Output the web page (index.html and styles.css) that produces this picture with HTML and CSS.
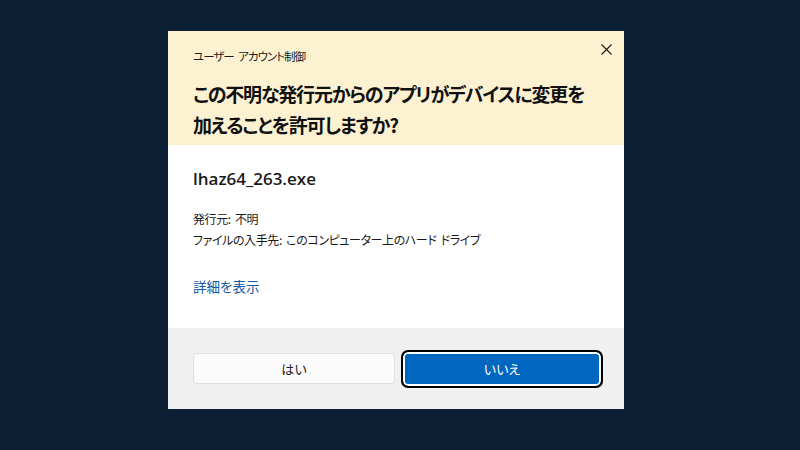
FILE: index.html
```html
<!DOCTYPE html>
<html lang="ja">
<head>
	<meta charset="utf-8"/>
	<title>ユーザー アカウント制御</title>
	<link rel="stylesheet" href="styles.css">
</head>
<body>
	<div class="dialog">
		<div class="head">
			<div class="caption">ユーザー アカウント制御</div>
			<button class="close" aria-label="閉じる">
				<svg width="11" height="11" viewBox="0 0 11 11"><path d="M0.5 0.5L10.5 10.5M10.5 0.5L0.5 10.5" stroke="#1a1a1a" stroke-width="1.1"/></svg>
			</button>
			<h1>この不明な発行元からのアプリがデバイスに変更を<br>加えることを許可しますか?</h1>
		</div>
		<div class="content">
			<div class="file">lhaz64_263.exe</div>
			<p class="info">発行元: 不明<br>ファイルの入手先: このコンピューター上のハード ドライブ</p>
			<a class="more" href="#">詳細を表示</a>
		</div>
		<div class="foot">
			<button class="btn">はい</button>
			<button class="btn primary">いいえ</button>
		</div>
	</div>
</body>
</html>
```

FILE: styles.css
```css
body {
	margin: 0;
	background: #0c1f35;
	font-family: "Noto Sans CJK JP", "Noto Sans", sans-serif;
	font-feature-settings: "palt";
	color: #1a1a1a;
}

.dialog {
	width: 456px;
	margin: 31px 0 0 168px;
	background: #fff;
}

.head {
	position: relative;
	background: #fcf2d2;
	height: 114px;
	box-sizing: border-box;
	padding: 16px 25px 0;
}

.caption {
	font-size: 11.5px;
	letter-spacing: -1px;
	word-spacing: 3px;
	line-height: 18px;
}

.close {
	position: absolute;
	top: 11px;
	right: 11px;
	width: 14px;
	height: 14px;
	padding: 0;
	border: 0;
	background: none;
	display: flex;
	align-items: center;
	justify-content: center;
}

h1 {
	margin: 13px 0 0;
	font-size: 19px;
	letter-spacing: -1.2px;
	font-weight: bold;
	line-height: 31px;
	white-space: nowrap;
	color: #111;
}

.content {
	height: 183px;
	box-sizing: border-box;
	padding: 22px 25px 0;
}

.file {
	font-family: "Segoe UI", "Open Sans", sans-serif;
	font-size: 17px;
	font-weight: 600;
	line-height: 24px;
}

.info {
	margin: 17px 0 0;
	font-size: 12px;
	letter-spacing: -0.4px;
	word-spacing: 2px;
	line-height: 21px;
}

.more {
	display: inline-block;
	margin-top: 26px;
	font-size: 13.5px;
	line-height: 20px;
	color: #0e58a5;
	text-decoration: none;
}

.foot {
	background: #f0f0f0;
	height: 81px;
	box-sizing: border-box;
	padding: 0 22px 0 25px;
	display: flex;
	align-items: center;
	gap: 7px;
}

.btn {
	font-family: inherit;
	font-feature-settings: "palt";
	font-size: 13px;
	color: #1a1a1a;
	width: 202px;
	height: 31px;
	border: 1px solid #e0e0e0;
	border-radius: 4px;
	background: #fbfbfb;
}

.primary {
	width: 200px;
	height: 36px;
	background: #0067c0;
	color: #fff;
	border: 1px solid #0067c0;
	border-radius: 6px;
	box-shadow: inset 0 0 0 2px #fff;
	outline: 2px solid #000;
	outline-offset: -1px;
}
```
